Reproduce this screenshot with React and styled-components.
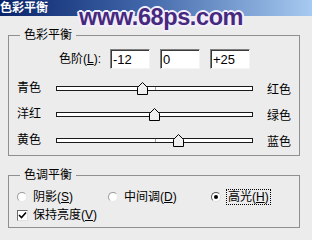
import React from 'react';
import styled, { createGlobalStyle } from 'styled-components';

const GlobalStyle = createGlobalStyle`
  html, body {
    margin: 0;
    padding: 0;
    background: #ececec;
  }
  body {
    font-family: "Liberation Sans", "Noto Sans CJK SC", sans-serif;
    font-size: 12px;
    color: #000;
  }
`;

const Window = styled.div`
  position: relative;
  width: 312px;
  height: 240px;
  overflow: hidden;
  background: #ececec;
  display: flex;
  flex-direction: column;
`;

const TitleBar = styled.div`
  flex: none;
  height: 16px;
  display: flex;
  align-items: center;
  background: linear-gradient(to right, #0a246a 0%, #3f65a8 45%, #a6caf0 100%);
  color: #fff;
  font-weight: bold;
  font-size: 12px;
  line-height: 16px;
`;

// site watermark stamped over the title bar
const Watermark = styled.div`
  position: absolute;
  left: 79px;
  top: 4px;
  font-family: "Liberation Sans", Arial, sans-serif;
  font-weight: bold;
  font-size: 23.5px;
  line-height: 26px;
  letter-spacing: -0.4px;
  color: #46297f;
  text-shadow:
    2px 0 0 #f2eefa, -2px 0 0 #f2eefa, 0 2px 0 #f2eefa, 0 -2px 0 #f2eefa,
    1.5px 1.5px 0 #f2eefa, -1.5px 1.5px 0 #f2eefa, 1.5px -1.5px 0 #f2eefa, -1.5px -1.5px 0 #f2eefa;
`;

const Content = styled.div`
  padding: 12px 0 0 8px;
  display: flex;
  flex-direction: column;
  gap: 12px;
`;

const Group = styled.fieldset`
  margin: 0;
  width: 292px;
  box-sizing: border-box;
  min-inline-size: 0;
  border: 1px solid #8f8f8f;
  padding: ${p => p.$pad};
`;

const Legend = styled.legend`
  margin-left: 3px;
  padding: 0 4px;
  line-height: 14px;
  font-size: 12px;
`;

const LevelRow = styled.div`
  display: flex;
  align-items: center;
  height: 20px;
  margin-bottom: 6px;
`;

const LevelLabel = styled.span`
  width: 93px;
  box-sizing: border-box;
  padding-right: 9px;
  text-align: right;
  line-height: 14px;
`;

const Inputs = styled.div`
  display: flex;
  gap: 10px;
`;

const NumBox = styled.input`
  width: 40px;
  height: 20px;
  box-sizing: border-box;
  margin: 0;
  padding: 0 2px;
  border: 1px solid;
  border-color: #808080 #f4f4f4 #f4f4f4 #808080;
  box-shadow: inset 1px 1px 0 #3a3a3a;
  background: #fff;
  font-family: "Liberation Sans", Arial, sans-serif;
  font-size: 13px;
  color: #000;
  outline: none;
`;

const SliderRow = styled.div`
  display: flex;
  align-items: center;
  height: 26px;
`;

const SideLabel = styled.span`
  flex: none;
  width: 39px;
  line-height: 14px;
`;

const Track = styled.div`
  position: relative;
  flex: none;
  width: 197px;
  height: 5px;
  box-sizing: border-box;
  margin-right: 14px;
  border: 1px solid #1a1a1a;
  background: #fff;
  &::after {
    content: "";
    position: absolute;
    left: 98px;
    top: 0;
    width: 1px;
    height: 100%;
    background: #a0a0a0;
  }
`;

const Thumb = styled.svg`
  position: absolute;
  top: -5px;
  left: ${p => p.$pos}%;
  margin-left: -6px;
  width: 11px;
  height: 13px;
  z-index: 1;
`;

const OptionRow = styled.div`
  display: flex;
  align-items: center;
  height: 18px;
`;

const Option = styled.label`
  display: flex;
  align-items: center;
  gap: ${p => p.$gap || 6}px;
  width: ${p => (p.$w ? `${p.$w}px` : 'auto')};
  line-height: 14px;
`;

const Radio = styled.span`
  position: relative;
  flex: none;
  width: 10px;
  height: 10px;
  box-sizing: border-box;
  border-radius: 50%;
  border: 1px solid;
  border-color: ${p => (p.$on ? '#555 #ddd #ddd #555' : '#9a9a9a #e6e6e6 #e6e6e6 #9a9a9a')};
  background: #fff;
  &::after {
    content: "";
    display: ${p => (p.$on ? 'block' : 'none')};
    position: absolute;
    left: 2px;
    top: 2px;
    width: 4px;
    height: 4px;
    border-radius: 50%;
    background: #000;
  }
`;

const CheckBox = styled.span`
  flex: none;
  width: 11px;
  height: 11px;
  box-sizing: border-box;
  border: 1px solid;
  border-color: #6a6a6a #e0e0e0 #e0e0e0 #6a6a6a;
  background: #fff;
  display: flex;
  align-items: center;
  justify-content: center;
`;

const Focus = styled.span`
  border: 1px dotted #000;
  padding: 0 1px;
`;

const sliders = [
  { left: '青色', right: '红色', value: -12 },
  { left: '洋红', right: '绿色', value: 0 },
  { left: '黄色', right: '蓝色', value: 25 },
];

const App = () => {
  return (
    <Window>
      <GlobalStyle />
      <TitleBar>色彩平衡</TitleBar>
      <Watermark>www.68ps.com</Watermark>
      <Content>
        <Group $pad="7px 0 2px 8px">
          <Legend>色彩平衡</Legend>
          <LevelRow>
            <LevelLabel>色阶(<u>L</u>):</LevelLabel>
            <Inputs>
              <NumBox readOnly value="-12" />
              <NumBox readOnly value="0" />
              <NumBox readOnly value="+25" />
            </Inputs>
          </LevelRow>
          {sliders.map(s => (
            <SliderRow key={s.left}>
              <SideLabel>{s.left}</SideLabel>
              <Track>
                <Thumb $pos={(s.value + 100) / 2} viewBox="0 0 11 13">
                  <polygon points="0.5,12.5 0.5,5.5 5.5,0.5 10.5,5.5 10.5,12.5" fill="#f0f0f0" stroke="#000" strokeWidth="1" />
                </Thumb>
              </Track>
              <span>{s.right}</span>
            </SliderRow>
          ))}
        </Group>
        <Group $pad="6px 0 3px 8px">
          <Legend>色调平衡</Legend>
          <OptionRow>
            <Option $w={91}><Radio /><span>阴影(<u>S</u>)</span></Option>
            <Option $w={103}><Radio /><span>中间调(<u>D</u>)</span></Option>
            <Option $gap={5}><Radio $on /><Focus>高光(<u>H</u>)</Focus></Option>
          </OptionRow>
          <OptionRow>
            <Option $gap={5}>
              <CheckBox>
                <svg width="9" height="9" viewBox="0 0 9 9">
                  <path d="M1 4 L3.5 6.5 L8 1.5" fill="none" stroke="#000" strokeWidth="1.6" />
                </svg>
              </CheckBox>
              <span>保持亮度(<u>V</u>)</span>
            </Option>
          </OptionRow>
        </Group>
      </Content>
    </Window>
  );
};

export default App;
